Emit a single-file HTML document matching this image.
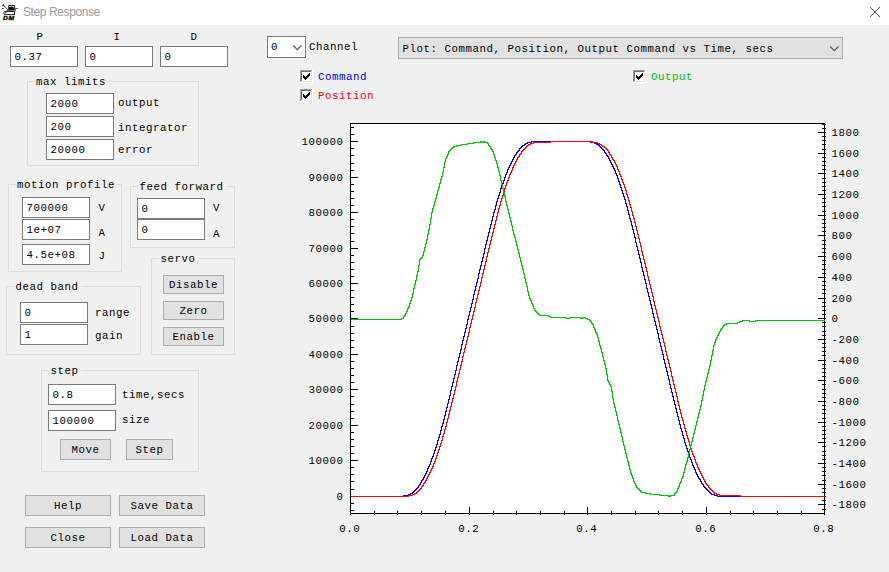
<!DOCTYPE html>
<html><head><meta charset="utf-8"><title>Step Response</title>
<style>
html,body{margin:0;padding:0}
body{width:889px;height:572px;background:#f0f0f0;position:relative;overflow:hidden;font-family:"Liberation Mono",monospace;font-size:10.8px;letter-spacing:0.52px;color:#000}
.t{position:absolute;line-height:14px;height:14px;white-space:pre}
.in{position:absolute;box-sizing:border-box;background:#fff;border:1px solid #7a7a7a}
.btn{position:absolute;box-sizing:border-box;background:#e1e1e1;border:1px solid #adadad}
.grp{position:absolute;box-sizing:border-box;border:1px solid #dcdcdc}
.gl{position:absolute;height:1px;background:#f0f0f0}
.chk{position:absolute}
#tb{position:absolute;left:0;top:0;width:889px;height:25px;background:#fff}
#tt{position:absolute;left:23px;top:4px;letter-spacing:-0.4px;font-family:"Liberation Sans",sans-serif;font-size:12px;line-height:16px;color:#999;white-space:pre}
#plot{position:absolute;left:0;top:0}
</style></head><body>
<div id="tb"></div>
<svg class="chk" style="left:0;top:0" width="22" height="24" viewBox="0 0 22 24">
<g fill="none" stroke="#000" stroke-width="0.9">
<path d="M3.5 4V5.5M2 5.5H4.5M3.5 5.5L7.5 9.5M2 8.5H3.8" stroke="#333"/>
<path d="M8.7 5.5H14.6V9.4H8.7Z" fill="#fff"/>
<path d="M9.6 7.2H13.2V9H9.6Z" fill="#000"/>
<path d="M6.8 10H14.8" stroke-width="1.1"/>
<path d="M15.4 8.5H18M15.4 8V11.5" stroke="#444" stroke-width="0.8"/>
<path d="M4.5 11.5H14.5V14.6H4.5Q3.2 13 4.5 11.5Z" fill="#fff"/>
<path d="M5 12.6H6.8" stroke="#555"/>
</g>
<text x="3" y="19.8" font-family="Liberation Sans,sans-serif" font-size="6.2" font-weight="bold" font-style="italic" fill="#000" stroke="#000" stroke-width="0.35" textLength="11.5" lengthAdjust="spacingAndGlyphs">DM</text>
</svg>
<div id="tt">Step Response</div>
<svg class="chk" style="left:869px;top:6px" width="12" height="12" viewBox="0 0 12 12"><path d="M1 1L11 11M11 1L1 11" stroke="#505050" stroke-width="1" fill="none"/></svg>
<span class="t " style="left:36.5px;top:30px;">P</span>
<span class="t " style="left:113.5px;top:30px;">I</span>
<span class="t " style="left:190.5px;top:30px;">D</span>
<div class="in" style="left:10px;top:46px;width:68px;height:21px"></div>
<span class="t " style="left:14.5px;top:50px;">0.37</span>
<div class="in" style="left:85px;top:46px;width:68px;height:21px"></div>
<span class="t " style="left:89.5px;top:50px;">0</span>
<div class="in" style="left:160px;top:46px;width:68px;height:21px"></div>
<span class="t " style="left:164.5px;top:50px;">0</span>
<div class="grp" style="left:27px;top:81px;width:172px;height:85px"></div>
<div class="gl" style="left:34.5px;top:81px;width:73.5px"></div>
<span class="t " style="left:36px;top:75px;">max limits</span>
<div class="in" style="left:46px;top:93px;width:68px;height:21px"></div>
<span class="t " style="left:50.5px;top:97px;">2000</span>
<div class="in" style="left:46px;top:116px;width:68px;height:21px"></div>
<span class="t " style="left:50.5px;top:120px;">200</span>
<div class="in" style="left:46px;top:139px;width:68px;height:21px"></div>
<span class="t " style="left:50.5px;top:143px;">20000</span>
<span class="t " style="left:118px;top:96px;">output</span>
<span class="t " style="left:118px;top:121px;">integrator</span>
<span class="t " style="left:118px;top:143px;">error</span>
<div class="grp" style="left:8px;top:184px;width:114px;height:88px"></div>
<div class="gl" style="left:15.5px;top:184px;width:101.5px"></div>
<span class="t " style="left:17px;top:178px;">motion profile</span>
<div class="in" style="left:22px;top:197px;width:68px;height:21px"></div>
<span class="t " style="left:26.5px;top:201px;">700000</span>
<div class="in" style="left:22px;top:219px;width:68px;height:21px"></div>
<span class="t " style="left:26.5px;top:223px;">1e+07</span>
<div class="in" style="left:22px;top:244px;width:68px;height:21px"></div>
<span class="t " style="left:26.5px;top:248px;">4.5e+08</span>
<span class="t " style="left:98.5px;top:201px;">V</span>
<span class="t " style="left:98.5px;top:226px;">A</span>
<span class="t " style="left:98.5px;top:249px;">J</span>
<div class="grp" style="left:130px;top:186px;width:105px;height:62px"></div>
<div class="gl" style="left:138px;top:186px;width:87.5px"></div>
<span class="t " style="left:139.5px;top:180px;">feed forward</span>
<div class="in" style="left:137px;top:198px;width:68px;height:21px"></div>
<span class="t " style="left:141.5px;top:202px;">0</span>
<div class="in" style="left:137px;top:219px;width:68px;height:21px"></div>
<span class="t " style="left:141.5px;top:223px;">0</span>
<span class="t " style="left:213px;top:201px;">V</span>
<span class="t " style="left:213px;top:227px;">A</span>
<div class="grp" style="left:151px;top:258px;width:84px;height:97px"></div>
<div class="gl" style="left:159px;top:258px;width:38.5px"></div>
<span class="t " style="left:160.5px;top:252px;">servo</span>
<div class="btn" style="left:163px;top:275px;width:61px;height:19px"></div>
<span class="t " style="left:169px;top:277.5px;">Disable</span>
<div class="btn" style="left:163px;top:301px;width:61px;height:19px"></div>
<span class="t " style="left:179.5px;top:303.5px;">Zero</span>
<div class="btn" style="left:163px;top:327px;width:61px;height:19px"></div>
<span class="t " style="left:172.5px;top:329.5px;">Enable</span>
<div class="grp" style="left:6px;top:286px;width:135px;height:69px"></div>
<div class="gl" style="left:14px;top:286px;width:66.5px"></div>
<span class="t " style="left:15.5px;top:280px;">dead band</span>
<div class="in" style="left:20px;top:302px;width:68px;height:21px"></div>
<span class="t " style="left:24.5px;top:306px;">0</span>
<div class="in" style="left:20px;top:324px;width:68px;height:21px"></div>
<span class="t " style="left:24.5px;top:328px;">1</span>
<span class="t " style="left:95px;top:306px;">range</span>
<span class="t " style="left:95px;top:328.5px;">gain</span>
<div class="grp" style="left:41px;top:370px;width:158px;height:102px"></div>
<div class="gl" style="left:49px;top:370px;width:31.5px"></div>
<span class="t " style="left:50.5px;top:364px;">step</span>
<div class="in" style="left:48px;top:384px;width:68px;height:21px"></div>
<span class="t " style="left:52.5px;top:388px;">0.8</span>
<div class="in" style="left:48px;top:410px;width:68px;height:21px"></div>
<span class="t " style="left:52.5px;top:414px;">100000</span>
<span class="t " style="left:122px;top:388px;">time,secs</span>
<span class="t " style="left:122px;top:413px;">size</span>
<div class="btn" style="left:60px;top:439px;width:51px;height:21px"></div>
<span class="t " style="left:71.5px;top:442.5px;">Move</span>
<div class="btn" style="left:126px;top:439px;width:47px;height:21px"></div>
<span class="t " style="left:135.5px;top:442.5px;">Step</span>
<div class="btn" style="left:25px;top:495px;width:86px;height:21px"></div>
<span class="t " style="left:54px;top:499px;">Help</span>
<div class="btn" style="left:119px;top:495px;width:86px;height:21px"></div>
<span class="t " style="left:130.5px;top:499px;">Save Data</span>
<div class="btn" style="left:25px;top:527px;width:86px;height:21px"></div>
<span class="t " style="left:50.5px;top:531px;">Close</span>
<div class="btn" style="left:119px;top:527px;width:86px;height:21px"></div>
<span class="t " style="left:130.5px;top:531px;">Load Data</span>
<div class="in" style="left:267px;top:36px;width:39px;height:22px"></div>
<span class="t " style="left:271px;top:40px;">0</span>
<svg class="chk" style="left:292px;top:44px" width="11" height="8" viewBox="0 0 11 8"><path d="M1.2 1.5L5.3 5.6L9.4 1.5" fill="none" stroke="#555" stroke-width="1.1"/></svg>
<span class="t " style="left:309px;top:40px;">Channel</span>
<div class="btn" style="left:398px;top:37px;width:445px;height:22px"></div>
<span class="t " style="left:402.5px;top:41.5px;">Plot: Command, Position, Output Command vs Time, secs</span>
<svg class="chk" style="left:829px;top:45px" width="11" height="8" viewBox="0 0 11 8"><path d="M1.2 1.5L5.3 5.6L9.4 1.5" fill="none" stroke="#555" stroke-width="1.1"/></svg>
<svg class="chk" style="left:300px;top:70px" width="13" height="13" viewBox="0 0 13 13" shape-rendering="crispEdges"><rect width="13" height="13" fill="#fff"/><path d="M0 0H12V1H1V12H0Z" fill="#a0a0a0"/><path d="M1 1H11V2H2V11H1Z" fill="#696969"/><path d="M11 1H12V12H1V11H11Z" fill="#e3e3e3"/><path d="M9 3h1v3h-1zM8 4h1v3h-1zM7 5h1v3h-1zM6 6h1v3h-1zM5 7h1v3h-1zM4 6h1v3h-1zM3 5h1v3h-1z" fill="#000"/></svg>
<svg class="chk" style="left:300px;top:89px" width="13" height="13" viewBox="0 0 13 13" shape-rendering="crispEdges"><rect width="13" height="13" fill="#fff"/><path d="M0 0H12V1H1V12H0Z" fill="#a0a0a0"/><path d="M1 1H11V2H2V11H1Z" fill="#696969"/><path d="M11 1H12V12H1V11H11Z" fill="#e3e3e3"/><path d="M9 3h1v3h-1zM8 4h1v3h-1zM7 5h1v3h-1zM6 6h1v3h-1zM5 7h1v3h-1zM4 6h1v3h-1zM3 5h1v3h-1z" fill="#000"/></svg>
<svg class="chk" style="left:633px;top:70px" width="13" height="13" viewBox="0 0 13 13" shape-rendering="crispEdges"><rect width="13" height="13" fill="#fff"/><path d="M0 0H12V1H1V12H0Z" fill="#a0a0a0"/><path d="M1 1H11V2H2V11H1Z" fill="#696969"/><path d="M11 1H12V12H1V11H11Z" fill="#e3e3e3"/><path d="M9 3h1v3h-1zM8 4h1v3h-1zM7 5h1v3h-1zM6 6h1v3h-1zM5 7h1v3h-1zM4 6h1v3h-1zM3 5h1v3h-1z" fill="#000"/></svg>
<span class="t " style="left:318px;top:70px;color:#00f">Command</span>
<span class="t " style="left:318px;top:89px;color:#f00">Position</span>
<span class="t " style="left:651px;top:70px;color:#00c000">Output</span>
<svg id="plot" width="889" height="572" viewBox="0 0 889 572" shape-rendering="crispEdges">
<rect x="350" y="123" width="475" height="391" fill="#fff"/>
<path d="M350 123.5H825M350 513.5H825M350.5 123V514M824.5 123V514M350 510.5H354M350 503.5H354M350 496.5H358M350 489.5H354M350 481.5H354M350 474.5H354M350 467.5H354M350 460.5H358M350 453.5H354M350 446.5H354M350 439.5H354M350 432.5H354M350 425.5H358M350 418.5H354M350 411.5H354M350 404.5H354M350 396.5H354M350 389.5H358M350 382.5H354M350 375.5H354M350 368.5H354M350 361.5H354M350 354.5H358M350 347.5H354M350 340.5H354M350 333.5H354M350 326.5H354M350 318.5H358M350 311.5H354M350 304.5H354M350 297.5H354M350 290.5H354M350 283.5H358M350 276.5H354M350 269.5H354M350 262.5H354M350 255.5H354M350 248.5H358M350 241.5H354M350 233.5H354M350 226.5H354M350 219.5H354M350 212.5H358M350 205.5H354M350 198.5H354M350 191.5H354M350 184.5H354M350 177.5H358M350 170.5H354M350 163.5H354M350 155.5H354M350 148.5H354M350 141.5H358M350 134.5H354M350 127.5H354M822 509.5H826M818 504.5H826M822 500.5H826M822 496.5H826M822 492.5H826M822 488.5H826M818 484.5H826M822 480.5H826M822 475.5H826M822 471.5H826M822 467.5H826M818 463.5H826M822 459.5H826M822 455.5H826M822 451.5H826M822 446.5H826M818 442.5H826M822 438.5H826M822 434.5H826M822 430.5H826M822 426.5H826M818 422.5H826M822 418.5H826M822 413.5H826M822 409.5H826M822 405.5H826M818 401.5H826M822 397.5H826M822 393.5H826M822 389.5H826M822 384.5H826M818 380.5H826M822 376.5H826M822 372.5H826M822 368.5H826M822 364.5H826M818 360.5H826M822 355.5H826M822 351.5H826M822 347.5H826M822 343.5H826M818 339.5H826M822 335.5H826M822 331.5H826M822 326.5H826M822 322.5H826M818 318.5H826M822 314.5H826M822 310.5H826M822 306.5H826M822 302.5H826M818 298.5H826M822 293.5H826M822 289.5H826M822 285.5H826M822 281.5H826M818 277.5H826M822 273.5H826M822 269.5H826M822 264.5H826M822 260.5H826M818 256.5H826M822 252.5H826M822 248.5H826M822 244.5H826M822 240.5H826M818 235.5H826M822 231.5H826M822 227.5H826M822 223.5H826M822 219.5H826M818 215.5H826M822 211.5H826M822 206.5H826M822 202.5H826M822 198.5H826M818 194.5H826M822 190.5H826M822 186.5H826M822 182.5H826M822 178.5H826M818 173.5H826M822 169.5H826M822 165.5H826M822 161.5H826M822 157.5H826M818 153.5H826M822 149.5H826M822 144.5H826M822 140.5H826M822 136.5H826M818 132.5H826M822 128.5H826M822 124.5H826M350.5 507V515M374.5 511V515M397.5 511V515M421.5 511V515M445.5 511V515M469.5 507V515M493.5 511V515M516.5 511V515M540.5 511V515M564.5 511V515M587.5 507V515M611.5 511V515M635.5 511V515M658.5 511V515M682.5 511V515M706.5 507V515M730.5 511V515M753.5 511V515M777.5 511V515M801.5 511V515M824.5 507V515" stroke="#000" stroke-width="1" fill="none"/>
<path d="M350.5 496.5H403.5V495.5H408.5V494.5H410.5V493.5H412.5V492.5H413.5V491.5H414.5V490.5H415.5V489.5H416.5V488.5H417.5V487.5H418.5V485.5H419.5V484.5H420.5V482.5H421.5V480.5H422.5V479.5H423.5V477.5H424.5V475.5H425.5V473.5H426.5V471.5H427.5V468.5H428.5V466.5H429.5V464.5H430.5V461.5H431.5V458.5H432.5V456.5H433.5V453.5H434.5V450.5H435.5V447.5H436.5V444.5H437.5V440.5H438.5V437.5H439.5V434.5H440.5V430.5H441.5V426.5H442.5V423.5H443.5V419.5H444.5V415.5H445.5V411.5H446.5V407.5H447.5V403.5H448.5V399.5H449.5V395.5H450.5V390.5H451.5V386.5H452.5V382.5H453.5V378.5H454.5V374.5H455.5V370.5H456.5V365.5H457.5V361.5H458.5V357.5H459.5V353.5H460.5V349.5H461.5V344.5H462.5V340.5H463.5V336.5H464.5V332.5H465.5V328.5H466.5V324.5H467.5V319.5H468.5V315.5H469.5V311.5H470.5V307.5H471.5V303.5H472.5V299.5H473.5V294.5H474.5V290.5H475.5V286.5H476.5V282.5H477.5V278.5H478.5V273.5H479.5V269.5H480.5V265.5H481.5V261.5H482.5V257.5H483.5V253.5H484.5V248.5H485.5V244.5H486.5V240.5H487.5V236.5H488.5V232.5H489.5V228.5H490.5V224.5H491.5V220.5H492.5V216.5H493.5V212.5H494.5V209.5H495.5V205.5H496.5V201.5H497.5V198.5H498.5V195.5H499.5V192.5H500.5V188.5H501.5V185.5H502.5V183.5H503.5V180.5H504.5V177.5H505.5V174.5H506.5V172.5H507.5V169.5H508.5V167.5H509.5V165.5H510.5V163.5H511.5V161.5H512.5V159.5H513.5V157.5H514.5V155.5H515.5V154.5H516.5V152.5H517.5V151.5H518.5V150.5H519.5V148.5H520.5V147.5H521.5V146.5H522.5V145.5H524.5V144.5H525.5V143.5H527.5V142.5H531.5V141.5H590.5V142.5H594.5V143.5H596.5V144.5H598.5V145.5H599.5V146.5H600.5V147.5H601.5V148.5H602.5V149.5H603.5V150.5H604.5V152.5H605.5V153.5H606.5V155.5H607.5V156.5H608.5V158.5H609.5V160.5H610.5V162.5H611.5V164.5H612.5V166.5H613.5V168.5H614.5V170.5H615.5V173.5H616.5V175.5H617.5V178.5H618.5V181.5H619.5V184.5H620.5V187.5H621.5V190.5H622.5V193.5H623.5V196.5H624.5V199.5H625.5V203.5H626.5V206.5H627.5V210.5H628.5V214.5H629.5V218.5H630.5V221.5H631.5V225.5H632.5V229.5H633.5V233.5H634.5V237.5H635.5V242.5H636.5V246.5H637.5V250.5H638.5V254.5H639.5V258.5H640.5V262.5H641.5V267.5H642.5V271.5H643.5V275.5H644.5V279.5H645.5V283.5H646.5V288.5H647.5V292.5H648.5V296.5H649.5V300.5H650.5V304.5H651.5V308.5H652.5V313.5H653.5V317.5H654.5V321.5H655.5V325.5H656.5V329.5H657.5V333.5H658.5V338.5H659.5V342.5H660.5V346.5H661.5V350.5H662.5V354.5H663.5V359.5H664.5V363.5H665.5V367.5H666.5V371.5H667.5V375.5H668.5V379.5H669.5V384.5H670.5V388.5H671.5V392.5H672.5V396.5H673.5V400.5H674.5V404.5H675.5V408.5H676.5V412.5H677.5V416.5H678.5V420.5H679.5V424.5H680.5V428.5H681.5V431.5H682.5V435.5H683.5V438.5H684.5V442.5H685.5V445.5H686.5V448.5H687.5V451.5H688.5V454.5H689.5V457.5H690.5V459.5H691.5V462.5H692.5V465.5H693.5V467.5H694.5V469.5H695.5V472.5H696.5V474.5H697.5V476.5H698.5V478.5H699.5V479.5H700.5V481.5H701.5V483.5H702.5V484.5H703.5V486.5H704.5V487.5H705.5V488.5H706.5V489.5H707.5V490.5H708.5V491.5H709.5V492.5H710.5V493.5H711.5V494.5H714.5V495.5H717.5V496.5H824.5" fill="none" stroke="#00f" stroke-width="1"/>
<path d="M350.5 496.5H408.5V495.5H412.5V494.5H414.5V493.5H416.5V492.5H417.5V491.5H418.5V490.5H419.5V489.5H420.5V488.5H421.5V486.5H422.5V485.5H423.5V483.5H424.5V482.5H425.5V480.5H426.5V478.5H427.5V476.5H428.5V474.5H429.5V472.5H430.5V470.5H431.5V468.5H432.5V466.5H433.5V463.5H434.5V461.5H435.5V458.5H436.5V455.5H437.5V452.5H438.5V449.5H439.5V446.5H440.5V443.5H441.5V440.5H442.5V436.5H443.5V433.5H444.5V429.5H445.5V426.5H446.5V422.5H447.5V418.5H448.5V414.5H449.5V410.5H450.5V406.5H451.5V402.5H452.5V398.5H453.5V394.5H454.5V390.5H455.5V386.5H456.5V381.5H457.5V377.5H458.5V373.5H459.5V369.5H460.5V365.5H461.5V361.5H462.5V356.5H463.5V352.5H464.5V348.5H465.5V344.5H466.5V340.5H467.5V336.5H468.5V332.5H469.5V327.5H470.5V323.5H471.5V319.5H472.5V315.5H473.5V311.5H474.5V307.5H475.5V302.5H476.5V298.5H477.5V294.5H478.5V290.5H479.5V286.5H480.5V282.5H481.5V277.5H482.5V273.5H483.5V269.5H484.5V265.5H485.5V261.5H486.5V256.5H487.5V252.5H488.5V248.5H489.5V244.5H490.5V240.5H491.5V236.5H492.5V232.5H493.5V228.5H494.5V224.5H495.5V220.5H496.5V216.5H497.5V212.5H498.5V208.5H499.5V205.5H500.5V201.5H501.5V198.5H502.5V195.5H503.5V191.5H504.5V188.5H505.5V185.5H506.5V182.5H507.5V180.5H508.5V177.5H509.5V174.5H510.5V172.5H511.5V170.5H512.5V167.5H513.5V165.5H514.5V163.5H515.5V161.5H516.5V159.5H517.5V157.5H518.5V156.5H519.5V154.5H520.5V153.5H521.5V151.5H522.5V150.5H523.5V149.5H524.5V148.5H525.5V147.5H526.5V146.5H527.5V145.5H528.5V144.5H530.5V143.5H533.5V142.5H550.5V141.5H592.5V142.5H597.5V143.5H599.5V144.5H601.5V145.5H602.5V146.5H604.5V147.5H605.5V148.5H606.5V149.5H607.5V150.5H608.5V152.5H609.5V154.5H610.5V155.5H611.5V157.5H612.5V159.5H613.5V160.5H614.5V162.5H615.5V164.5H616.5V166.5H617.5V169.5H618.5V171.5H619.5V174.5H620.5V176.5H621.5V179.5H622.5V182.5H623.5V184.5H624.5V187.5H625.5V190.5H626.5V194.5H627.5V197.5H628.5V200.5H629.5V204.5H630.5V207.5H631.5V211.5H632.5V215.5H633.5V218.5H634.5V222.5H635.5V226.5H636.5V230.5H637.5V234.5H638.5V238.5H639.5V242.5H640.5V246.5H641.5V251.5H642.5V255.5H643.5V259.5H644.5V263.5H645.5V267.5H646.5V271.5H647.5V276.5H648.5V280.5H649.5V284.5H650.5V288.5H651.5V292.5H652.5V296.5H653.5V301.5H654.5V305.5H655.5V309.5H656.5V313.5H657.5V317.5H658.5V321.5H659.5V326.5H660.5V330.5H661.5V334.5H662.5V338.5H663.5V342.5H664.5V346.5H665.5V351.5H666.5V355.5H667.5V359.5H668.5V363.5H669.5V367.5H670.5V371.5H671.5V376.5H672.5V380.5H673.5V384.5H674.5V388.5H675.5V392.5H676.5V396.5H677.5V401.5H678.5V405.5H679.5V409.5H680.5V413.5H681.5V417.5H682.5V420.5H683.5V424.5H684.5V428.5H685.5V431.5H686.5V435.5H687.5V438.5H688.5V441.5H689.5V445.5H690.5V448.5H691.5V451.5H692.5V454.5H693.5V456.5H694.5V459.5H695.5V462.5H696.5V464.5H697.5V467.5H698.5V469.5H699.5V471.5H700.5V473.5H701.5V475.5H702.5V477.5H703.5V479.5H704.5V481.5H705.5V483.5H706.5V484.5H707.5V485.5H708.5V487.5H709.5V488.5H710.5V489.5H711.5V490.5H712.5V491.5H713.5V492.5H714.5V493.5H716.5V494.5H719.5V495.5H740.5V496.5H824.5" fill="none" stroke="#f00" stroke-width="1"/>
<path d="M350.5 319.5H401.5V318.5H403.5V316.5H404.5V315.5H405.5V313.5H406.5V311.5H407.5V308.5H408.5V306.5H409.5V303.5H410.5V300.5H411.5V297.5H412.5V293.5H413.5V288.5H414.5V284.5H415.5V280.5H416.5V275.5H417.5V271.5H418.5V265.5H419.5V259.5H420.5V258.5H421.5V257.5H422.5V255.5H423.5V251.5H424.5V247.5H425.5V243.5H426.5V239.5H427.5V234.5H428.5V229.5H429.5V224.5H430.5V218.5H431.5V212.5H432.5V208.5H433.5V205.5H434.5V201.5H435.5V198.5H436.5V194.5H437.5V190.5H438.5V187.5H439.5V183.5H440.5V179.5H441.5V176.5H442.5V172.5H443.5V167.5H444.5V162.5H445.5V158.5H446.5V156.5H447.5V154.5H448.5V151.5H449.5V150.5H450.5V149.5H451.5V148.5H452.5V147.5H453.5V146.5H456.5V145.5H461.5V144.5H467.5V143.5H473.5V142.5H480.5V141.5H481.5V142.5H483.5V141.5H484.5V142.5H487.5V143.5H488.5V145.5H489.5V146.5H490.5V148.5H491.5V149.5H492.5V151.5H493.5V154.5H494.5V157.5H495.5V160.5H496.5V163.5H497.5V167.5H498.5V171.5H499.5V175.5H500.5V180.5H501.5V184.5H502.5V188.5H503.5V192.5H504.5V196.5H505.5V201.5H506.5V205.5H507.5V209.5H508.5V213.5H509.5V217.5H510.5V221.5H511.5V225.5H512.5V230.5H513.5V234.5H514.5V237.5H515.5V241.5H516.5V245.5H517.5V249.5H518.5V253.5H519.5V257.5H520.5V261.5H521.5V265.5H522.5V269.5H523.5V273.5H524.5V278.5H525.5V282.5H526.5V286.5H527.5V291.5H528.5V295.5H529.5V298.5H530.5V300.5H531.5V303.5H532.5V305.5H533.5V308.5H534.5V310.5H535.5V311.5H536.5V312.5H537.5V313.5H538.5V314.5H539.5V315.5H548.5V316.5H550.5V317.5H566.5V318.5H569.5V317.5H580.5V318.5H582.5V317.5H585.5V318.5H587.5V319.5H589.5V320.5H590.5V321.5H591.5V323.5H592.5V324.5H593.5V327.5H594.5V329.5H595.5V332.5H596.5V334.5H597.5V337.5H598.5V341.5H599.5V345.5H600.5V348.5H601.5V352.5H602.5V356.5H603.5V360.5H604.5V364.5H605.5V368.5H606.5V374.5H607.5V380.5H608.5V382.5H609.5V384.5H610.5V386.5H611.5V391.5H612.5V398.5H613.5V403.5H614.5V407.5H615.5V411.5H616.5V415.5H617.5V420.5H618.5V424.5H619.5V428.5H620.5V432.5H621.5V436.5H622.5V441.5H623.5V445.5H624.5V449.5H625.5V453.5H626.5V457.5H627.5V461.5H628.5V465.5H629.5V469.5H630.5V473.5H631.5V475.5H632.5V478.5H633.5V481.5H634.5V483.5H635.5V485.5H636.5V487.5H637.5V488.5H638.5V489.5H639.5V490.5H640.5V491.5H641.5V492.5H645.5V493.5H650.5V494.5H659.5V495.5H668.5V496.5H670.5V495.5H674.5V493.5H675.5V492.5H676.5V491.5H677.5V488.5H678.5V486.5H679.5V483.5H680.5V481.5H681.5V478.5H682.5V476.5H683.5V472.5H684.5V468.5H685.5V464.5H686.5V461.5H687.5V457.5H688.5V453.5H689.5V449.5H690.5V445.5H691.5V441.5H692.5V437.5H693.5V433.5H694.5V429.5H695.5V425.5H696.5V421.5H697.5V417.5H698.5V413.5H699.5V409.5H700.5V405.5H701.5V400.5H702.5V395.5H703.5V390.5H704.5V385.5H705.5V381.5H706.5V377.5H707.5V373.5H708.5V369.5H709.5V365.5H710.5V360.5H711.5V355.5H712.5V350.5H713.5V345.5H714.5V342.5H715.5V339.5H716.5V337.5H717.5V335.5H718.5V333.5H719.5V331.5H720.5V329.5H721.5V328.5H722.5V326.5H723.5V325.5H724.5V324.5H726.5V323.5H737.5V322.5H739.5V321.5H742.5V320.5H749.5V321.5H755.5V320.5H824.5" fill="none" stroke="#00c000" stroke-width="1"/>
</svg>
<span class="t " style="left:336.5px;top:489.5px;">0</span>
<span class="t " style="left:308.5px;top:453.5px;">10000</span>
<span class="t " style="left:308.5px;top:418.5px;">20000</span>
<span class="t " style="left:308.5px;top:382.5px;">30000</span>
<span class="t " style="left:308.5px;top:347.5px;">40000</span>
<span class="t " style="left:308.5px;top:311.5px;">50000</span>
<span class="t " style="left:308.5px;top:276.5px;">60000</span>
<span class="t " style="left:308.5px;top:241.5px;">70000</span>
<span class="t " style="left:308.5px;top:205.5px;">80000</span>
<span class="t " style="left:308.5px;top:170.5px;">90000</span>
<span class="t " style="left:301.5px;top:134.5px;">100000</span>
<span class="t " style="left:831.5px;top:497.5px;">-1800</span>
<span class="t " style="left:831.5px;top:477.5px;">-1600</span>
<span class="t " style="left:831.5px;top:456.5px;">-1400</span>
<span class="t " style="left:831.5px;top:435.5px;">-1200</span>
<span class="t " style="left:831.5px;top:415.5px;">-1000</span>
<span class="t " style="left:831.5px;top:394.5px;">-800</span>
<span class="t " style="left:831.5px;top:373.5px;">-600</span>
<span class="t " style="left:831.5px;top:353.5px;">-400</span>
<span class="t " style="left:831.5px;top:332.5px;">-200</span>
<span class="t " style="left:831.5px;top:311.5px;">0</span>
<span class="t " style="left:831.5px;top:291.5px;">200</span>
<span class="t " style="left:831.5px;top:270.5px;">400</span>
<span class="t " style="left:831.5px;top:249.5px;">600</span>
<span class="t " style="left:831.5px;top:228.5px;">800</span>
<span class="t " style="left:831.5px;top:208.5px;">1000</span>
<span class="t " style="left:831.5px;top:187.5px;">1200</span>
<span class="t " style="left:831.5px;top:166.5px;">1400</span>
<span class="t " style="left:831.5px;top:146.5px;">1600</span>
<span class="t " style="left:831.5px;top:125.5px;">1800</span>
<span class="t " style="left:339.2px;top:522px;">0.0</span>
<span class="t " style="left:458.2px;top:522px;">0.2</span>
<span class="t " style="left:576.2px;top:522px;">0.4</span>
<span class="t " style="left:695.2px;top:522px;">0.6</span>
<span class="t " style="left:813.2px;top:522px;">0.8</span>
</body></html>
